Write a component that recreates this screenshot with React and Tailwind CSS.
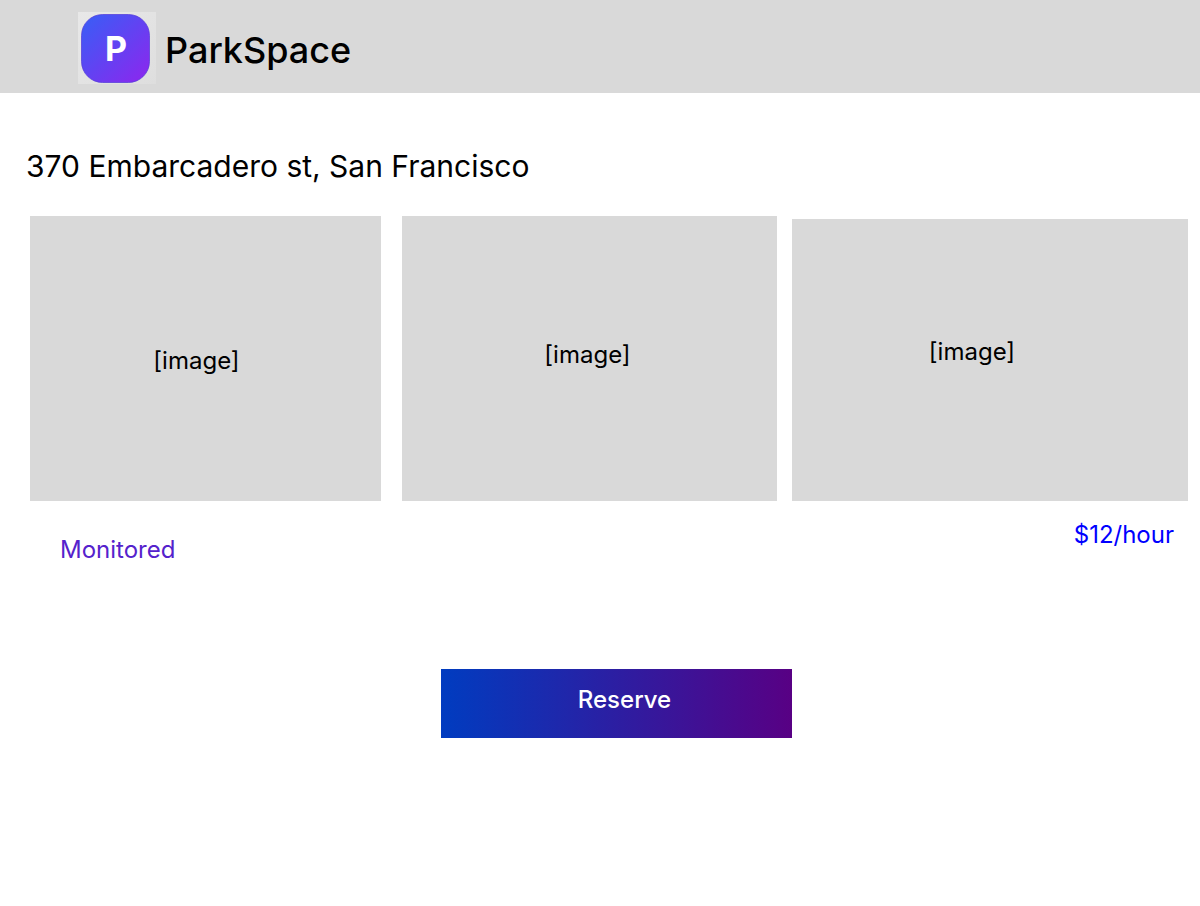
const photos = [
  { id: 1, box: "mr-[21px] h-[285px] pr-[18px] pt-1" },
  { id: 2, box: "mr-[15px] h-[285px] pr-1 pb-2" },
  { id: 3, box: "h-[282px] pr-9 pb-4" },
];

function Logo() {
  return (
    <svg width="78" height="72" viewBox="0 0 78 72" aria-hidden="true">
      <defs>
        <linearGradient id="badge" x1="0" y1="0" x2="1" y2="1">
          <stop offset="0.05" stopColor="#3b5cf6" />
          <stop offset="0.95" stopColor="#8a28ee" />
        </linearGradient>
        <linearGradient id="plate" x1="0" y1="0" x2="1" y2="1">
          <stop offset="0" stopColor="#e8e8e8" />
          <stop offset="1" stopColor="#dedede" />
        </linearGradient>
      </defs>
      <rect width="78" height="72" fill="url(#plate)" />
      <rect x="3.5" y="2.5" width="68" height="68" rx="21" fill="url(#badge)" stroke="#5038d8" strokeOpacity="0.7" />
      <text x="38" y="49" textAnchor="middle" fill="#fff" className="font-['Inter'] text-[34px] font-bold">P</text>
    </svg>
  );
}

export default function App() {
  return (
    <div className="min-h-screen bg-white font-['Inter',sans-serif] text-black">
      <header className="flex h-[93px] items-center bg-[#d9d9d9] pt-3 pb-[9px] pl-[78px]">
        <Logo />
        <span className="ml-[9px] pt-1 text-4xl font-medium">ParkSpace</span>
      </header>
      <main className="pt-[53px]">
        <h1 className="pl-[26px] text-[30px] leading-10">370 Embarcadero st, San Francisco</h1>
        <section className="mt-[30px] grid grid-cols-[372fr_390fr_396fr] items-end pr-3 pl-[30px] text-2xl">
          {photos.map((photo) => (
            <div key={photo.id} className={`${photo.box} flex items-center justify-center bg-[#d9d9d9]`}>
              [image]
            </div>
          ))}
        </section>
        <div className="flex items-start justify-between pt-[18px] pr-[26px] pl-[60px] text-2xl">
          <p className="pt-[15px] text-[#5522cc]">Monitored</p>
          <p className="text-[#0000ff]">$12/hour</p>
        </div>
        <div className="mt-[103px] flex justify-center pl-[33px]">
          <button type="button" className="h-[69px] w-[351px] bg-linear-to-r/srgb from-[#003cc0] to-[#580084] pb-2 pl-4 text-2xl font-medium text-white">
            Reserve
          </button>
        </div>
      </main>
    </div>
  );
}
